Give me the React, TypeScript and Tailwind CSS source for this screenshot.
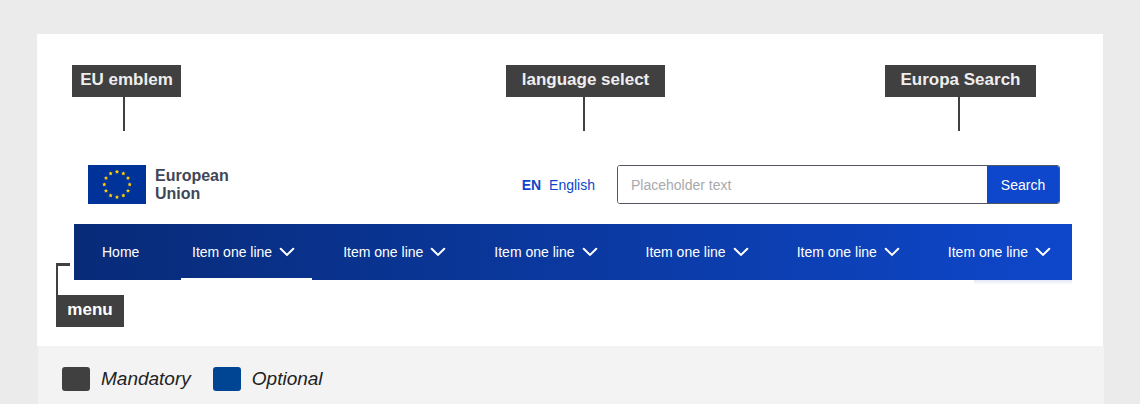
import type { ReactNode } from "react";

const items = [1, 2, 3, 4, 5, 6];

function Callout({ children, className }: { children: ReactNode; className: string }) {
  return (
    <div
      className={`relative flex h-8 items-center justify-center whitespace-nowrap bg-[#404040] pb-0.5 text-[17px] font-bold ${className}`}
    >
      {children}
    </div>
  );
}

function Chevron() {
  return (
    <svg width="16" height="10" viewBox="0 0 16 10" fill="none" stroke="currentColor" strokeWidth="2" aria-hidden="true">
      <path d="M1.700 1.700 8 7.900l6.300-6.200" strokeLinecap="round" />
    </svg>
  );
}

function starPoints(cx: number, cy: number, r: number) {
  return Array.from({ length: 10 }, (_, i) => {
    const a = (i * Math.PI) / 5 - Math.PI / 2;
    const d = i % 2 ? r * 0.55 : r;
    return `${(cx + d * Math.cos(a)).toFixed(2)},${(cy + d * Math.sin(a)).toFixed(2)}`;
  }).join(" ");
}

function Flag() {
  return (
    <svg width="58" height="39" viewBox="0 0 58 39" role="img" aria-label="EU flag">
      <rect width="58" height="39" fill="#039" />
      {Array.from({ length: 12 }, (_, i) => {
        const a = (i * Math.PI) / 6;
        return (
          <polygon key={i} points={starPoints(29 + 12.7 * Math.sin(a), 19.5 - 12.7 * Math.cos(a), 2.1)} fill="#fc0" />
        );
      })}
    </svg>
  );
}

export default function App() {
  return (
    <div className="flex min-h-screen flex-col bg-[#ebebeb] px-[37px] pt-[34px] font-['Liberation_Sans',Arial,sans-serif]">
      <main className="bg-white pb-[19px] pt-[31px]">
        <div className="flex pl-[35px] pr-[67px] text-[#eeeeee]">
          <Callout className="w-[109px]">
            EU emblem
            <span className="absolute left-[51px] top-full h-[34px] w-0.5 bg-[#404040]" />
          </Callout>
          <Callout className="ml-auto mr-[220px] w-[159px]">
            language select
            <span className="absolute left-[77px] top-full h-[34px] w-0.5 bg-[#404040]" />
          </Callout>
          <Callout className="w-[151px]">
            Europa Search
            <span className="absolute left-[73px] top-full h-[34px] w-0.5 bg-[#404040]" />
          </Callout>
        </div>

        <header className="mt-[68px] pl-[37px] pr-[31px]">
          <div className="flex items-center pl-3.5 pr-3 text-sm">
            <a href="#home" className="flex items-center gap-[9px] text-base font-bold leading-[18px] text-[#404656]">
              <Flag />
              <span>
                European
                <br />
                Union
              </span>
            </a>
            <a href="#language" className="ml-auto flex gap-2 text-[#0e47cb]">
              <b>EN</b>
              <span>English</span>
            </a>
            <form
              onSubmit={(e) => e.preventDefault()}
              className="ml-[22px] flex h-[39px] w-[443px] overflow-hidden rounded-[3px] border border-[#515560]"
            >
              <input
                type="search"
                aria-label="Search"
                placeholder="Placeholder text"
                className="min-w-0 flex-1 bg-white px-[13px] text-[#404656] outline-none placeholder:text-[#a8a9ad]"
              />
              <button type="submit" className="w-[72px] bg-[#0e47cb] text-white">
                Search
              </button>
            </form>
          </div>

          <nav
            aria-label="Main"
            className="relative mt-5 flex h-14 bg-linear-to-r from-[#082b78] to-[#0e47cb] pl-7 pr-1 text-sm text-white"
          >
            <a href="#home" className="flex w-[79px] items-center">
              Home
            </a>
            <ul className="grid flex-1 grid-cols-6 gap-5">
              {items.map((item) => (
                <li key={item} className="flex">
                  <button
                    type="button"
                    aria-expanded="false"
                    className={`flex flex-1 items-center gap-[7px] whitespace-nowrap border-y-2 border-t-transparent pl-[11px] ${
                      item === 1 ? "border-b-white" : "border-b-transparent"
                    }`}
                  >
                    Item one line
                    <Chevron />
                  </button>
                </li>
              ))}
            </ul>
            <span className="absolute right-0 top-full h-[5px] w-[98px] bg-linear-to-b from-[#e3e9f6] to-white" />
          </nav>
        </header>

        <div className="mt-[15px] flex pl-[19px] text-white">
          <Callout className="w-[68px]">
            menu
            <span className="absolute bottom-full left-0 h-8 w-3.5 border-l-2 border-t-3 border-[#404040]" />
          </Callout>
        </div>
      </main>

      <footer className="ml-px -mr-px flex flex-1 gap-[22px] bg-[#f3f3f3] pb-3 pl-6 pt-[21px] text-[19px] italic leading-6 text-[#222222]">
        <div className="flex items-start gap-[11px]">
          <span className="h-6 w-7 rounded-[3px] bg-[#404040]" />
          Mandatory
        </div>
        <div className="flex items-start gap-[11px]">
          <span className="h-6 w-7 rounded-[3px] bg-[#004494]" />
          Optional
        </div>
      </footer>
    </div>
  );
}
